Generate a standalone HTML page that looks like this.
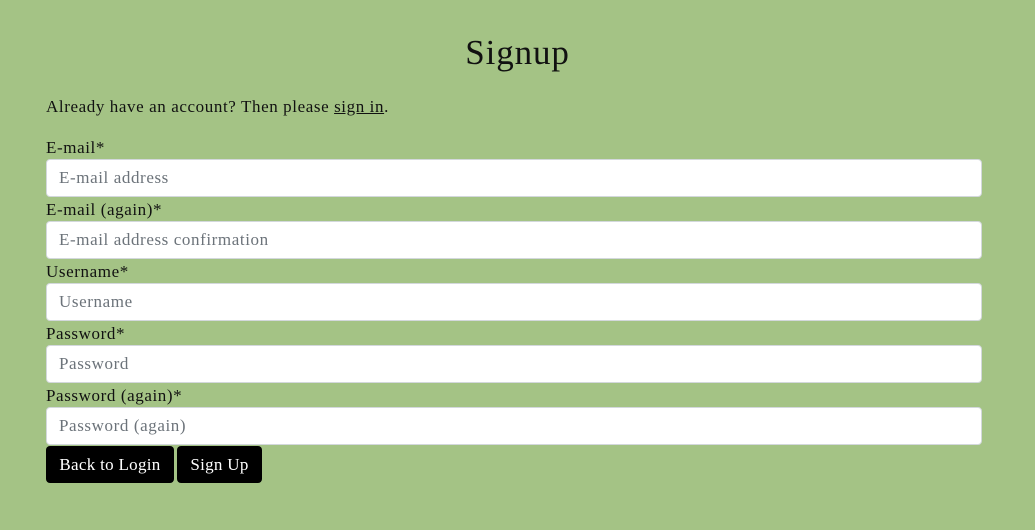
<!DOCTYPE html>
<html><head><style>
html,body{margin:0;padding:0;background:#a4c385;width:1035px;height:530px;overflow:hidden;font-family:"Liberation Serif",serif;color:#111;}
h1{position:absolute;top:33px;left:0;width:1035px;text-align:center;margin:0;font-size:35px;letter-spacing:0.9px;font-weight:normal;line-height:40px;}
.p,.l,.i,.b{font-size:17px;letter-spacing:0.6px;}
.p{position:absolute;left:46px;top:96px;line-height:22px;}
.p a{color:#111;text-decoration:underline;}
.l{position:absolute;left:46px;line-height:20px;}
.i{position:absolute;left:46px;height:36px;background:#fff;border:1px solid #d3d8dc;border-radius:4px;box-sizing:content-box;line-height:36px;color:#6c737a;padding-left:12px;width:922px;}
.b{position:absolute;top:446px;height:37px;background:#000;color:#fff;border-radius:4px;line-height:37px;text-align:center;letter-spacing:0.3px;}
</style></head><body>
<h1>Signup</h1>
<div class="p">Already have an account? Then please <a>sign in</a>.</div>
<div class="l" style="top:138px">E-mail*</div>
<div class="i" style="top:159px">E-mail address</div>
<div class="l" style="top:200px">E-mail (again)*</div>
<div class="i" style="top:221px">E-mail address confirmation</div>
<div class="l" style="top:262px">Username*</div>
<div class="i" style="top:283px">Username</div>
<div class="l" style="top:324px">Password*</div>
<div class="i" style="top:345px">Password</div>
<div class="l" style="top:386px">Password (again)*</div>
<div class="i" style="top:407px">Password (again)</div>
<div class="b" style="left:46px;width:128px">Back to Login</div>
<div class="b" style="left:177px;width:85px">Sign Up</div>
</body></html>
